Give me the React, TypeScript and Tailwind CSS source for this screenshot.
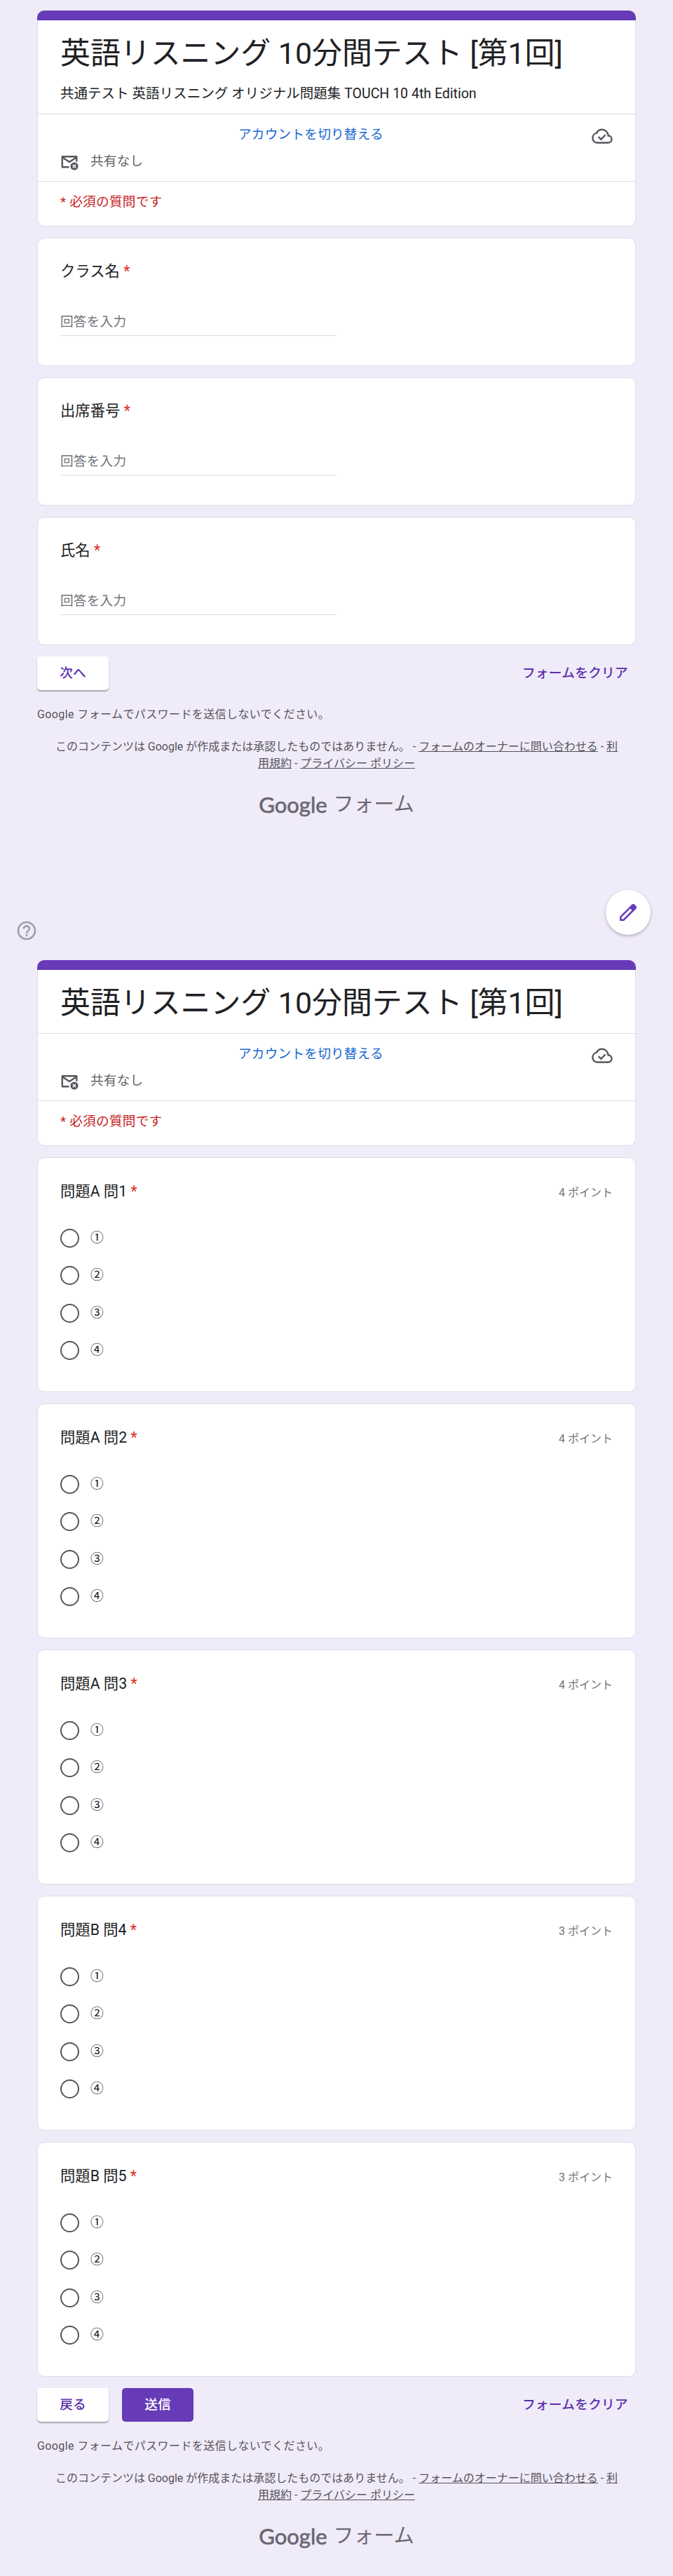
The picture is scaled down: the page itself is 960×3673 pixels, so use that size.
import { MdHelpOutline } from "react-icons/md";

export default function App() {
  return (
    <main className="h-[3673px] overflow-hidden bg-[#f0ebf8] font-['Roboto','Noto_Sans_CJK_JP',sans-serif] text-[#202124]">
      <section className="mx-auto w-[854px] pt-[15px]">
        <FormHeader description="共通テスト 英語リスニング オリジナル問題集 TOUCH 10 4th Edition" />
        <div className="mt-4 flex flex-col gap-4">
          {fields.map((field) => (
            <TextQuestion key={field} label={field} />
          ))}
        </div>
        <div className="mt-4 flex h-12 items-center justify-between">
          <Button>次へ</Button>
          <ClearButton />
        </div>
        <FormFooter />
      </section>

      <div className="mt-[102px] flex h-[100px] items-start justify-between pr-8 pl-[22px]">
        <MdHelpOutline className="mt-[42px] size-8 text-[#a09da8]" />
        <button className="flex size-16 items-center justify-center rounded-full bg-white shadow-[0_2px_4px_rgba(0,0,0,0.25)]">
          <PencilIcon />
        </button>
      </div>

      <section className="mx-auto w-[854px]">
        <FormHeader />
        <div className="mt-4 flex flex-col gap-4">
          {questions.map((question) => (
            <ChoiceQuestion key={question.label} question={question} />
          ))}
        </div>
        <div className="mt-4 flex h-12 items-center justify-between">
          <div className="flex gap-[19px]">
            <Button>戻る</Button>
            <Button primary>送信</Button>
          </div>
          <ClearButton />
        </div>
        <FormFooter />
      </section>
    </main>
  );
}

const FormHeader = ({ description }: { description?: string }) => {
  return (
    <header className="overflow-hidden rounded-[10px] bg-white shadow-[inset_0_0_0_1px_#dfdce6]">
      <div className="h-[14px] bg-[#673ab7]" />
      <div className={description ? "h-[133px] px-[33px]" : "h-[90px] px-[33px]"}>
        <h1 className="pt-5 text-[42.9px] leading-[54px] whitespace-nowrap text-[#202124]">
          英語リスニング 10分間テスト [第1回]
        </h1>
        {description && (
          <p className="mt-[17px] text-[19.55px] leading-7 whitespace-nowrap">
            {description}
          </p>
        )}
      </div>
      <div className="h-[96px] border-t border-[#dadce0] px-[33px]">
        <div className="flex h-[57px] items-center justify-between">
          <a className="ml-[254px] text-[18.67px] tracking-[0.2px] text-[#1967d2]">
            アカウントを切り替える
          </a>
          <CloudDoneIcon />
        </div>
        <div className="flex h-5 items-center gap-[17px]">
          <MailOffIcon />
          <span className="text-[18.67px] leading-5 tracking-[0.2px] text-[#5f6368]">
            共有なし
          </span>
        </div>
      </div>
      <p className="h-[65px] border-t border-[#dadce0] px-[33px] pt-[15px] text-[18.67px] leading-7 tracking-[0.25px] text-[#c5221f]">
        * 必須の質問です
      </p>
    </header>
  );
};

const TextQuestion = ({ label }: { label: string }) => {
  return (
    <div className="h-[183px] rounded-[10px] border border-[#dfdce6] bg-white px-8 pt-[31px]">
      <Label text={label} />
      <div className="mt-[42px] h-[34px] w-[394px] border-b border-[#dadce0] text-[18.67px] leading-7 tracking-[0.2px] text-[#70757a]">
        回答を入力
      </div>
    </div>
  );
};

const ChoiceQuestion = ({ question }: { question: typeof questions[0] }) => {
  return (
    <div className="h-[335px] rounded-[10px] border border-[#dfdce6] bg-white px-8 pt-[32px]">
      <div className="flex items-center justify-between">
        <Label text={question.label} />
        <span className="pt-[3px] text-base text-[#70757a]">
          {question.points} ポイント
        </span>
      </div>
      <div className="mt-[37px] flex flex-col gap-[26.33px]">
        {choices.map((choice) => (
          <label key={choice} className="flex h-[27px] items-center gap-4">
            <span className="size-[27px] rounded-full border-[2.67px] border-[#54585c]" />
            <span className="text-[18.67px] leading-[27px]">{choice}</span>
          </label>
        ))}
      </div>
    </div>
  );
};

const Label = ({ text }: { text: string }) => {
  return (
    <h2 className="text-[21.33px] leading-8">
      {text} <span className="text-[#d93025]">*</span>
    </h2>
  );
};

const Button = ({
  children,
  primary,
}: {
  children: string;
  primary?: boolean;
}) => {
  return (
    <button
      className={
        primary
          ? "h-12 w-[102px] rounded-[5px] bg-[#673ab7] pb-px text-[18.67px] font-medium text-white"
          : "h-12 w-[102px] rounded-[5px] bg-white pb-px text-[18.67px] font-medium text-[#5b2fae] shadow-[0_2px_2px_rgba(0,0,0,0.3)]"
      }
    >
      {children}
    </button>
  );
};

const ClearButton = () => {
  return (
    <button className="mr-[11px] pb-px text-[18.67px] font-medium tracking-[0.3px] text-[#5b2fae]">
      フォームをクリア
    </button>
  );
};

const FormFooter = () => {
  return (
    <footer className="text-base text-[#56535c]">
      <p className="mt-[23px] leading-6 tracking-[0.4px]">
        Google フォームでパスワードを送信しないでください。
      </p>
      <div className="mt-[22px] text-center leading-[23.5px] whitespace-nowrap">
        <p>
          このコンテンツは Google が作成または承認したものではありません。 -{" "}
          <a className="underline">フォームのオーナーに問い合わせる</a> -{" "}
          <a className="underline">利</a>
        </p>
        <p>
          <a className="underline">用規約</a> -{" "}
          <a className="underline">プライバシー ポリシー</a>
        </p>
      </div>
      <div className="mt-[27px] flex h-10 items-center justify-center gap-[9px] text-[#6b6873]">
        <span className="font-['Lato'] text-[31px] leading-10 [-webkit-text-stroke:0.7px]">
          Google
        </span>
        <span className="text-[29px] leading-10">フォーム</span>
      </div>
    </footer>
  );
};

const PencilIcon = () => {
  return (
    <svg className="size-8" viewBox="0 0 24 24">
      <path
        d="M4 20v-3.200L16.300 4.500l3.200 3.200L7.200 20Z"
        fill="none"
        stroke="#673ab7"
        strokeWidth="1.900"
      />
      <path
        d="m13.200 6.700 3.200-3.200a1.800 1.800 0 0 1 2.500 0l1.600 1.600a1.800 1.800 0 0 1 0 2.500l-3.200 3.200Z"
        fill="#673ab7"
      />
    </svg>
  );
};

const CloudDoneIcon = () => {
  return (
    <svg
      className="mt-1 h-[22px] w-[30px] text-[#54585c]"
      viewBox="0 0 30 22"
      fill="none"
      stroke="currentColor"
      strokeWidth="2.4"
    >
      <path d="M7.500 20.500H23.500a5 5 0 0 0 .2-10c-.5-5-4.200-8.800-8.800-8.800-3.600 0-6.600 2-8 5.200C3.600 7.400 1.400 10.200 1.400 13.600c0 3.900 2.600 6.900 6.100 6.900Z" />
      <path d="m9.800 12.200 3.600 3.600 6.200-6.600" />
    </svg>
  );
};

const MailOffIcon = () => {
  return (
    <svg className="mt-1 h-[22px] w-[26px] text-[#54585c]" viewBox="0 0 26 22">
      <path
        d="M12.500 17.300H2.800V2.300h20.500v7.500M2.800 3.200l10.200 6.800 10.300-6.800"
        fill="none"
        stroke="currentColor"
        strokeWidth="2.400"
        strokeLinejoin="round"
      />
      <circle cx="20" cy="16" r="5.600" fill="currentColor" />
      <path d="m17.800 13.800 4.400 4.400m0-4.400-4.400 4.400" stroke="#fff" strokeWidth="1.500" />
    </svg>
  );
};

const fields = ["クラス名", "出席番号", "氏名"];

const choices = ["①", "②", "③", "④"];

const questions = [
  { label: "問題A 問1", points: 4 },
  { label: "問題A 問2", points: 4 },
  { label: "問題A 問3", points: 4 },
  { label: "問題B 問4", points: 3 },
  { label: "問題B 問5", points: 3 },
];
